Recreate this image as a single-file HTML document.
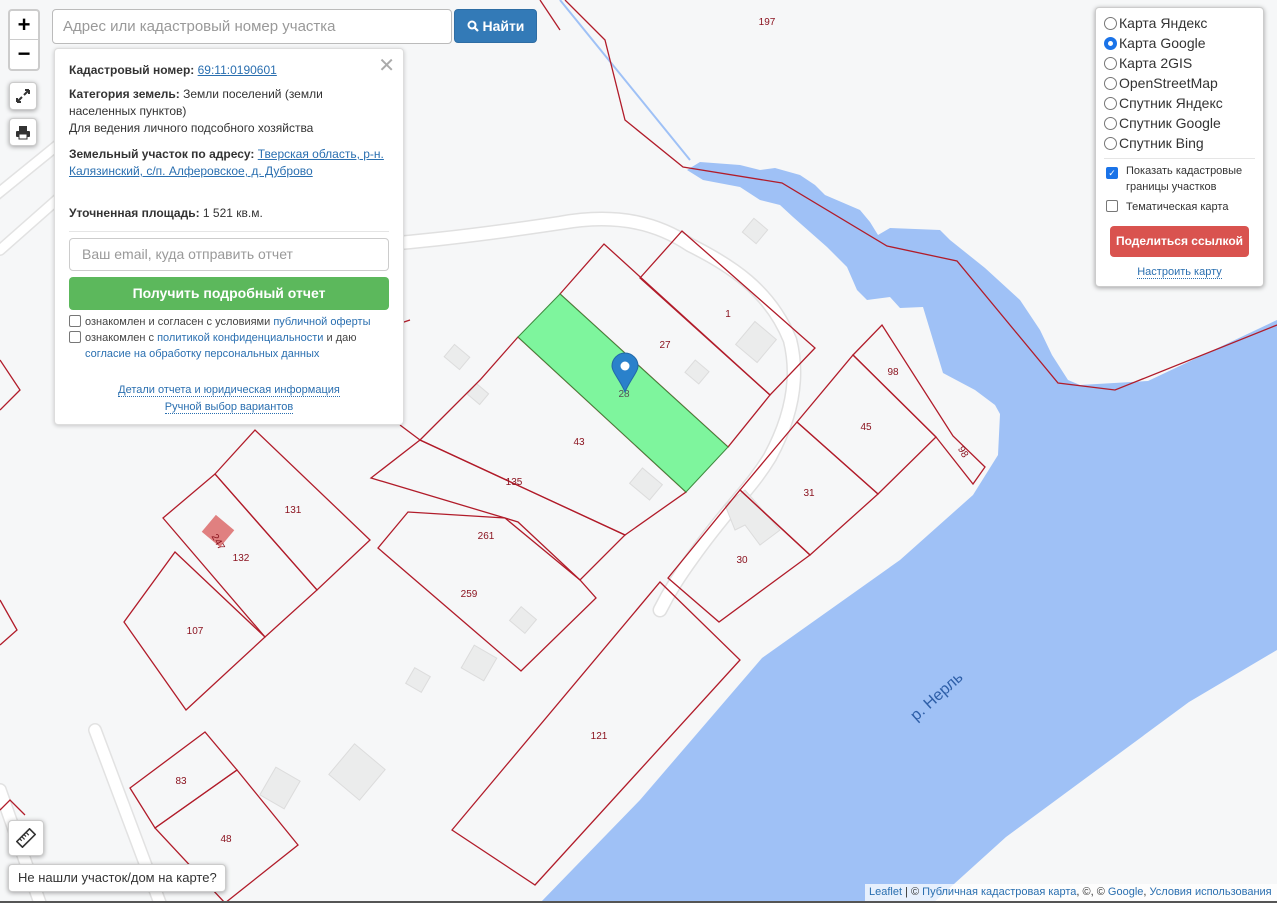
<!DOCTYPE html>
<html><head><meta charset="utf-8"><style>
*{box-sizing:border-box}
body{margin:0;width:1277px;height:903px;overflow:hidden;background:#f6f7f8;font-family:"Liberation Sans",Arial,sans-serif;position:relative}
svg.map{position:absolute;left:0;top:0}
.box{position:absolute;background:#fff;border:1px solid #ccc;border-radius:4px;box-shadow:0 1px 5px rgba(0,0,0,.35)}
a{color:#2a6fb0;text-decoration:underline}
.pop{position:absolute;left:54px;top:48px;width:350px;height:377px;background:#fff;border:1px solid #ddd;border-radius:4px;box-shadow:0 1px 4px rgba(0,0,0,.2);font-size:12px;color:#333;padding:0 14px}
.pop p{margin:0;line-height:17px}
b{font-weight:bold}
.cb{display:inline-block;width:12px;height:12px;border:1px solid #777;border-radius:2px;vertical-align:-2px;margin-right:4px;background:#fff}
.rd{display:inline-block;width:13px;height:13px;border:1px solid #777;border-radius:50%;vertical-align:-2px;margin-right:2px;background:#fff}
</style></head><body>
<svg class="map" width="1277" height="903" viewBox="0 0 1277 903">
<g fill="none" stroke-linecap="round">
<path d="M-10 200 L150 70 M0 250 L170 100" stroke="#e2e2e2" stroke-width="12"/>
<path d="M-10 200 L150 70 M0 250 L170 100" stroke="#fff" stroke-width="9"/>
<path d="M300 250 C400 245 480 235 560 223 C620 212 660 225 690 245 C730 265 770 290 790 340 C800 380 790 420 770 457 C750 490 730 505 693 557 C680 575 670 590 660 610" stroke="#e0e0e0" stroke-width="15"/>
<path d="M300 250 C400 245 480 235 560 223 C620 212 660 225 690 245 C730 265 770 290 790 340 C800 380 790 420 770 457 C750 490 730 505 693 557 C680 575 670 590 660 610" stroke="#fff" stroke-width="12"/>
<path d="M95 730 L160 903 M0 790 L40 903" stroke="#e2e2e2" stroke-width="14"/>
<path d="M95 730 L160 903 M0 790 L40 903" stroke="#fff" stroke-width="11"/>
</g>
<path fill="#9fc1f6" d="M540 903 L640 800 L762 658 L900 560 L973 495 L998 455 L1000 414 L995 405 L975 390 L943 373 L933 340 L923 307 L900 308 L890 297 L867 300 L857 290 L847 267 L827 247 L793 217 L780 205 L760 200 L740 187 L703 180 L687 170 L700 162 L740 165 L760 170 L775 168 L800 175 L815 185 L825 195 L860 210 L870 222 L878 235 L890 228 L940 230 L950 240 L985 268 L1020 300 L1040 330 L1052 355 L1068 380 L1080 385 L1148 381 L1277 320 L1277 650 L1189 702 L1006 837 L933 903 Z"/>
<path d="M560 0 L690 160" stroke="#9fc1f6" stroke-width="2"/>
<g fill="#ebecec" stroke="#dcdcdc">
<rect x="746" y="222" width="18" height="18" transform="rotate(40 755 231)"/>
<rect x="742" y="327" width="28" height="30" transform="rotate(40 756 342)"/>
<rect x="688" y="364" width="18" height="16" transform="rotate(40 697 372)"/>
<rect x="447" y="349" width="20" height="16" transform="rotate(40 457 357)"/>
<rect x="470" y="387" width="16" height="14" transform="rotate(40 478 394)"/>
<rect x="633" y="474" width="26" height="20" transform="rotate(40 646 484)"/>
<rect x="594" y="373" width="26" height="20" transform="rotate(40 607 383)"/>
<rect x="513" y="611" width="20" height="18" transform="rotate(40 523 620)"/>
<rect x="466" y="650" width="26" height="26" transform="rotate(30 479 663)"/>
<rect x="409" y="671" width="18" height="18" transform="rotate(30 418 680)"/>
<rect x="337" y="752" width="40" height="40" transform="rotate(40 357 772)"/>
<rect x="266" y="772" width="28" height="32" transform="rotate(30 280 788)"/>
<path d="M725 505 L745 490 L780 530 L760 545 L745 525 L735 530 Z"/>
</g>
<g fill="none" stroke="#b11c2a" stroke-width="1.3">
<polygon points="560,294 604,244 770,395 728,447"/>
<polygon points="640,278 682,231 815,348 770,395"/>
<polygon points="420,440 480,380 518,337 686,492 625,535"/>
<polygon points="371,478 420,440 625,535 580,580 518,522 505,518"/>
<polygon points="378,548 408,512 505,518 580,580 596,598 521,671"/>
<polygon points="797,422 853,355 936,437 878,494"/>
<polygon points="853,355 882,325 953,436 985,467 973,484 936,437"/>
<polygon points="740,490 797,422 878,494 810,555"/>
<polygon points="668,578 740,490 810,555 719,622"/>
<polygon points="452,830 660,582 740,660 535,885"/>
<polygon points="215,474 255,430 370,540 317,590"/>
<polygon points="163,518 215,474 317,590 265,637"/>
<polygon points="124,622 175,552 265,637 186,710"/>
<polygon points="130,788 205,732 237,770 155,828"/>
<polygon points="155,828 237,770 298,845 225,903"/>
<polyline points="0,360 20,390 0,410"/>
<polyline points="0,600 17,630 0,645"/>
<polyline points="0,810 10,800 25,815"/>
<polyline points="565,0 605,40 625,120 683,167 782,183 887,246 957,261 1058,383 1115,390 1277,325"/>
<polyline points="540,0 560,30"/>
<polyline points="380,330 410,320"/>
<polyline points="400,425 420,440"/>
</g>
<polygon points="518,337 560,294 728,447 686,492" fill="#7ef59d" stroke="#3e8a3e" stroke-width="1"/>
<rect x="206" y="520" width="24" height="22" fill="#e08080" transform="rotate(40 218 531)"/>
<g font-size="10" fill="#8b1420" text-anchor="middle" font-family="Liberation Sans,sans-serif">
<text x="767" y="25">197</text><text x="665" y="348">27</text><text x="728" y="317">1</text>
<text x="579" y="445">43</text><text x="514" y="485">135</text><text x="486" y="539">261</text>
<text x="469" y="597">259</text><text x="866" y="430">45</text><text x="893" y="375">98</text>
<text x="809" y="496">31</text><text x="742" y="563">30</text><text x="599" y="739">121</text>
<text x="293" y="513">131</text><text x="241" y="561">132</text><text x="195" y="634">107</text>
<text x="181" y="784">83</text><text x="226" y="842">48</text><text x="624" y="397" fill="#555">28</text>
<text x="963" y="455" transform="rotate(60 963 452)">98</text>
<text x="218" y="545" transform="rotate(60 218 542)">247</text>
</g>
<text x="940" y="700" font-size="16" fill="#2e5fa8" transform="rotate(-42 940 700)" text-anchor="middle">р. Нерль</text>
<path d="M625 392 C620 380 612 372 612 366 A13 13 0 0 1 638 366 C638 372 630 380 625 392 Z" fill="#2a81cb" stroke="#2268a8"/>
<circle cx="625" cy="366" r="4.5" fill="#fff"/>
</svg>

<div class="box" style="left:8px;top:9px;width:32px;height:62px;border:2px solid rgba(0,0,0,.2);box-shadow:none">
<div style="height:29px;border-bottom:1px solid #ccc;text-align:center;font-size:22px;font-weight:bold;line-height:28px">+</div>
<div style="text-align:center;font-size:22px;font-weight:bold;line-height:28px">−</div></div>
<div class="box" style="left:9px;top:82px;width:28px;height:28px;text-align:center">
<svg width="16" height="16" viewBox="0 0 16 16" style="margin-top:5px"><path d="M2 14 L7 9 M2 14 L2 10 M2 14 L6 14 M14 2 L9 7 M14 2 L10 2 M14 2 L14 6" stroke="#333" stroke-width="2" fill="none"/></svg></div>
<div class="box" style="left:9px;top:118px;width:28px;height:28px;text-align:center">
<svg width="16" height="16" viewBox="0 0 16 16" style="margin-top:5px"><rect x="4" y="2" width="8" height="5" fill="#333"/><rect x="1" y="7" width="14" height="6" rx="1" fill="#333"/><rect x="4" y="10" width="8" height="5" fill="#fff" stroke="#333"/></svg></div>

<div style="position:absolute;left:52px;top:9px;width:400px;height:35px;background:#fff;border:1px solid #bbb;border-radius:4px;font-size:15px;color:#999;padding:8px 10px">Адрес или кадастровый номер участка</div>
<div style="position:absolute;left:454px;top:9px;width:83px;height:34px;background:#337ab7;border:1px solid #2e6da4;border-radius:4px;color:#fff;font-size:14px;font-weight:bold;text-align:center;line-height:32px"><svg width="12" height="12" viewBox="0 0 12 12" style="vertical-align:-1px"><circle cx="5" cy="5" r="3.5" stroke="#fff" stroke-width="2" fill="none"/><path d="M7.5 7.5 L11 11" stroke="#fff" stroke-width="2.2"/></svg> Найти</div>

<div class="pop">
<div style="position:absolute;right:8px;top:4px;font-size:20px;color:#aaa">✕</div>
<p style="margin-top:13px"><b>Кадастровый номер:</b> <a>69:11:0190601</a></p>
<p style="margin-top:7px"><b>Категория земель:</b> Земли поселений (земли населенных пунктов)<br>Для ведения личного подсобного хозяйства</p>
<p style="margin-top:9px"><b>Земельный участок по адресу:</b> <a>Тверская область, р-н. Калязинский, с/п. Алферовское, д. Дуброво</a></p>
<p style="margin-top:25px"><b>Уточненная площадь:</b> 1 521 кв.м.</p>
<div style="border-top:1px solid #e5e5e5;margin-top:9px"></div>
<div style="margin-top:6px;height:33px;border:1px solid #ccc;border-radius:4px;font-size:14px;color:#999;padding:7px 12px">Ваш email, куда отправить отчет</div>
<div style="margin-top:6px;height:33px;background:#5cb85c;border-radius:4px;color:#fff;font-size:14px;font-weight:bold;text-align:center;line-height:33px">Получить подробный отчет</div>
<div style="font-size:11px;line-height:16px;margin-top:4px;color:#444"><span class="cb"></span>ознакомлен и согласен с условиями <span style="color:#2a6fb0">публичной оферты</span><br><span class="cb"></span>ознакомлен с <span style="color:#2a6fb0">политикой конфиденциальности</span> и даю<br><span style="margin-left:16px;color:#2a6fb0">согласие на обработку персональных данных</span></div>
<div style="text-align:center;font-size:11px;line-height:17px;margin-top:20px;color:#2a6fb0"><span style="border-bottom:1px dotted #2a6fb0">Детали отчета и юридическая информация</span><br><span style="border-bottom:1px dotted #2a6fb0">Ручной выбор вариантов</span></div>
</div>

<div class="box" style="left:1095px;top:7px;width:169px;height:280px;padding:5px 8px;font-size:14px;color:#333">
<div style="line-height:20px">
<div><span class="rd"></span>Карта Яндекс</div>
<div><span class="rd" style="border:4px solid #1a73e8"></span>Карта Google</div>
<div><span class="rd"></span>Карта 2GIS</div>
<div><span class="rd"></span>OpenStreetMap</div>
<div><span class="rd"></span>Спутник Яндекс</div>
<div><span class="rd"></span>Спутник Google</div>
<div><span class="rd"></span>Спутник Bing</div></div>
<div style="border-top:1px solid #e5e5e5;margin:5px 0 4px"></div>
<div style="font-size:11px;line-height:16px;display:flex"><span class="cb" style="background:#1a73e8;border-color:#1a73e8;color:#fff;font-size:9px;text-align:center;line-height:11px;margin:4px 8px 0 2px;flex:none">✓</span><span>Показать кадастровые границы участков</span></div>
<div style="font-size:11px;line-height:16px;margin-top:4px"><span class="cb" style="margin:0 8px 0 2px"></span>Тематическая карта</div>
<div style="margin:11px 6px 0;height:31px;background:#d9534f;border-radius:4px;color:#fff;font-size:12px;font-weight:bold;text-align:center;line-height:31px">Поделиться ссылкой</div>
<div style="text-align:center;font-size:11px;margin-top:9px;color:#2a6fb0"><span style="border-bottom:1px dotted #2a6fb0">Настроить карту</span></div>
</div>

<div class="box" style="left:8px;top:820px;width:36px;height:36px;text-align:center">
<svg width="20" height="20" viewBox="0 0 20 20" style="margin-top:7px"><g transform="rotate(-45 10 10)"><rect x="1" y="6" width="18" height="8" fill="none" stroke="#333" stroke-width="1.6"/><path d="M5 6 V9 M8 6 V10 M11 6 V9 M14 6 V10" stroke="#333" stroke-width="1.2"/></g></svg></div>
<div class="box" style="left:8px;top:864px;width:218px;height:28px;font-size:13px;line-height:26px;padding-left:9px;color:#333">Не нашли участок/дом на карте?</div>
<div style="position:absolute;left:865px;top:884px;width:412px;height:17px;background:rgba(255,255,255,.75);font-size:11px;line-height:17px;padding-left:4px;color:#333"><span style="color:#2a6fb0">Leaflet</span> | © <span style="color:#2a6fb0">Публичная кадастровая карта</span>, ©, © <span style="color:#2a6fb0">Google</span>, <span style="color:#2a6fb0">Условия использования</span></div>
<div style="position:absolute;left:0;top:901px;width:1277px;height:2px;background:#555"></div>
</body></html>
